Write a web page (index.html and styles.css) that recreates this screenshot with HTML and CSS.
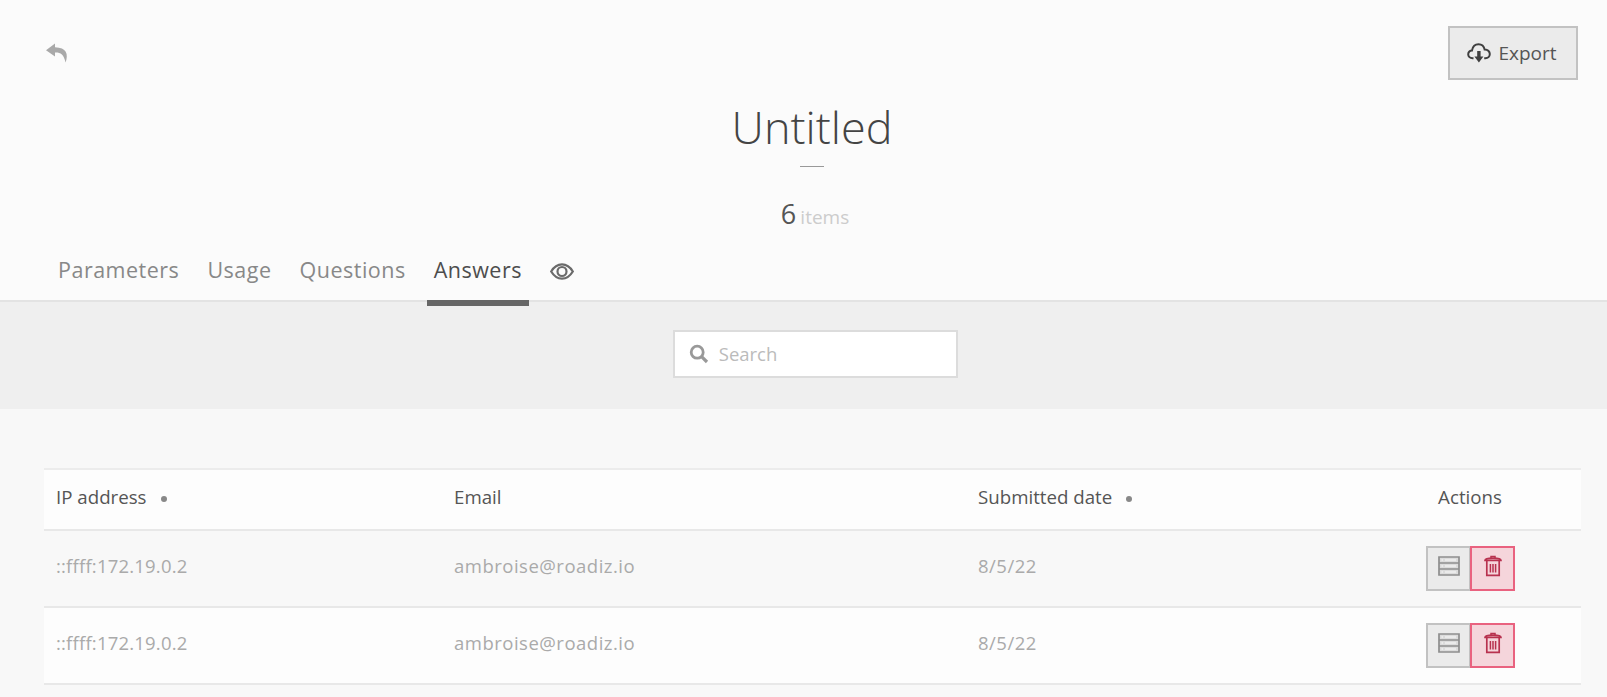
FILE: index.html
```html
<!DOCTYPE html>
<html lang="en">
<head>
<meta charset="utf-8">
<title>Untitled</title>
<link rel="stylesheet" href="styles.css">
</head>
<body>
<header class="head">
  <div class="top-bar">
    <a class="back" href="#" aria-label="Back">
      <svg width="24" height="20" viewBox="0 0 24 20"><path d="M10 0.5 L1 7.2 L10 13.5 V9.6 C15.5 9.4 18.6 11 20.6 19.5 C23.6 11 21.5 4.6 10 4.2 Z" fill="#a9a9a9"/></svg>
    </a>
    <a class="export" href="#">
      <svg width="24" height="20" viewBox="0 0 24 20" fill="none"><path d="M6.5 15.2 H5.6 C3 15.2 1.2 13.4 1.2 11.2 C1.2 9 3 7.3 5 7.4 C5.8 3 8.4 1.2 11.5 1.2 C14.6 1.2 17 3.4 17.6 6.4 C20.6 6.2 22.8 8.6 22.8 11 C22.8 13.4 20.9 15.2 18.4 15.2 H17.2" stroke="#3f3f3f" stroke-width="2"/><path d="M10.2 8 H13.6 V13.4 H16.4 L11.9 19.4 L7.4 13.4 H10.2 Z" fill="#3f3f3f"/></svg>
      <span>Export</span>
    </a>
  </div>
  <h1 class="title">Untitled</h1>
  <div class="dash"></div>
  <p class="count"><span class="num">6</span> <span class="unit">items</span></p>
  <nav class="tabs">
    <a class="tab" href="#">Parameters</a>
    <a class="tab" href="#">Usage</a>
    <a class="tab" href="#">Questions</a>
    <a class="tab active" href="#">Answers</a>
    <a class="tab eye" href="#" aria-label="Preview">
      <svg width="24" height="17" viewBox="0 0 24 17" fill="none"><path d="M1.2 8.5 C4 3.8 7.8 1.4 12 1.4 C16.2 1.4 20 3.8 22.8 8.5 C20 13.2 16.2 15.6 12 15.6 C7.8 15.6 4 13.2 1.2 8.5 Z" stroke="#6a6a6a" stroke-width="2.2"/><circle cx="12" cy="8.5" r="4.5" stroke="#6a6a6a" stroke-width="2.2"/></svg>
    </a>
  </nav>
</header>
<section class="filter">
  <label class="search">
    <svg width="20" height="20" viewBox="0 0 20 20" fill="none"><circle cx="8.2" cy="8.2" r="6" stroke="#999" stroke-width="2.8"/><path d="M12.6 12.6 L18 18" stroke="#999" stroke-width="3.2"/></svg>
    <span class="search-label">Search</span>
  </label>
</section>
<main class="content">
  <table class="list">
    <colgroup><col class="c1"><col class="c2"><col class="c3"><col class="c4"></colgroup>
    <thead>
      <tr>
        <th>IP address<i class="dot"></i></th>
        <th>Email</th>
        <th>Submitted date<i class="dot"></i></th>
        <th class="actions">Actions</th>
      </tr>
    </thead>
    <tbody>
      <tr class="alt">
        <td class="ip">::ffff:172.19.0.2</td>
        <td>ambroise@roadiz.io</td>
        <td>8/5/22</td>
        <td class="actions">
          <div class="btns">
            <a class="btn" href="#" aria-label="Details"><svg width="22" height="20" viewBox="0 0 22 20" fill="none"><path d="M1 1 H21 V19 H1 Z" fill="#dcdcdc"/><path d="M1 1 H21 V19 H1 Z M1 7 H21 M1 13 H21" stroke="#8e8e8e" stroke-width="1.7"/><path d="M7 4 H18 M7 10 H18 M7 16 H18" stroke="#fafafa" stroke-width="1.2"/><path d="M3.5 4 H5 M3.5 10 H5 M3.5 16 H5" stroke="#fafafa" stroke-width="1.2"/></svg></a>
            <a class="btn danger" href="#" aria-label="Delete"><svg width="18" height="22" viewBox="0 0 18 22" fill="none"><path d="M1 5.4 C1 3.6 5 3.2 9 3.2 C13 3.2 17 3.6 17 5.4 Z" stroke="#b8324f" stroke-width="1.7"/><path d="M7 3 V1.5 H11 V3" stroke="#b8324f" stroke-width="1.5"/><path d="M2.8 5.6 V20.4 H15.2 V5.6" stroke="#b8324f" stroke-width="1.7"/><path d="M6.4 9 V17.4 M9 9 V17.4 M11.6 9 V17.4" stroke="#b8324f" stroke-width="1.5"/></svg></a>
          </div>
        </td>
      </tr>
      <tr>
        <td class="ip">::ffff:172.19.0.2</td>
        <td>ambroise@roadiz.io</td>
        <td>8/5/22</td>
        <td class="actions">
          <div class="btns">
            <a class="btn" href="#" aria-label="Details"><svg width="22" height="20" viewBox="0 0 22 20" fill="none"><path d="M1 1 H21 V19 H1 Z" fill="#dcdcdc"/><path d="M1 1 H21 V19 H1 Z M1 7 H21 M1 13 H21" stroke="#8e8e8e" stroke-width="1.7"/><path d="M7 4 H18 M7 10 H18 M7 16 H18" stroke="#fafafa" stroke-width="1.2"/><path d="M3.5 4 H5 M3.5 10 H5 M3.5 16 H5" stroke="#fafafa" stroke-width="1.2"/></svg></a>
            <a class="btn danger" href="#" aria-label="Delete"><svg width="18" height="22" viewBox="0 0 18 22" fill="none"><path d="M1 5.4 C1 3.6 5 3.2 9 3.2 C13 3.2 17 3.6 17 5.4 Z" stroke="#b8324f" stroke-width="1.7"/><path d="M7 3 V1.5 H11 V3" stroke="#b8324f" stroke-width="1.5"/><path d="M2.8 5.6 V20.4 H15.2 V5.6" stroke="#b8324f" stroke-width="1.7"/><path d="M6.4 9 V17.4 M9 9 V17.4 M11.6 9 V17.4" stroke="#b8324f" stroke-width="1.5"/></svg></a>
          </div>
        </td>
      </tr>
    </tbody>
  </table>
</main>
</body>
</html>
```
FILE: styles.css
```css
* { box-sizing: border-box; }
html, body { height: 100%; }
body {
  margin: 0;
  background: #f8f8f8;
  font-family: "Open Sans", sans-serif;
  color: #444;
  overflow: hidden;
}
a { color: inherit; text-decoration: none; }

.head { height: 300px; background: #fbfbfb; border-bottom: 2px solid #e3e3e3; display: flex; flex-direction: column; align-items: center; box-sizing: content-box; }
.top-bar { width: 100%; height: 105px; padding: 26px 29px 0 45px; display: flex; justify-content: space-between; align-items: flex-start; }
.back { margin-top: 17px; display: block; line-height: 0; }
.export {
  width: 130px; height: 54px; padding-right: 2px;
  display: flex; align-items: center; justify-content: center; gap: 7px;
  background: #ebebeb; border: 2px solid #c2c2c2;
  font-size: 19px; color: #555;
}
.title { margin: 0 0 0 17px; font-weight: 300; font-size: 45px; line-height: 44px; color: #444; }
.dash { width: 24px; height: 1px; background: #999; margin: 17px 0 0 17px; }
.count { margin: 30px 0 0 23px; line-height: 33px; }
.num { font-size: 27px; color: #555; }
.unit { font-size: 19px; color: #ccc; }
.tabs { align-self: flex-start; margin: auto 0 0 51px; display: flex; height: 45px; }
.tab { padding: 0 7px; margin-right: 14px; font-size: 21.5px; line-height: 30px; color: #888; letter-spacing: 0.5px; position: relative; }
.tab.active { color: #4d4d4d; }
.tab.active::after { content: ""; position: absolute; left: 0; right: 0; bottom: -6px; height: 6px; background: #666; }
.tab.eye { padding-top: 8px; line-height: 0; }

.filter { height: 107px; background: #efefef; display: flex; justify-content: center; padding-top: 28px; padding-left: 23.5px; }
.search { width: 285px; height: 48px; background: #fff; border: 2px solid #dcdcdc; display: flex; align-items: center; gap: 10px; padding-left: 14px; font-size: 18.5px; color: #bbb; }
.search-label { margin-top: -2px; }

.content { padding: 59px 26px 0 44px; }
.list { width: 100%; table-layout: fixed; border-collapse: collapse; background: #fdfdfd; }
.c1 { width: 398px; } .c2 { width: 524px; } .c3 { width: 423px; }
.list th, .list td { padding: 0 0 6px 12px; text-align: left; border-bottom: 2px solid #e8e8e8; }
.list th { height: 61px; font-weight: 400; font-size: 18.7px; color: #555; border-top: 2px solid #ececec; }
.list td { height: 77px; font-size: 18.5px; color: #aaa; letter-spacing: 0.5px; }
.list td.ip { letter-spacing: 0.2px; }
.alt { background: #f8f8f8; }
.list .actions { text-align: center; padding: 0 30px 0 0; }
.list th.actions { padding-bottom: 6px; }
.dot { display: inline-block; width: 6px; height: 6px; border-radius: 50%; background: #888; margin-left: 14px; vertical-align: 2px; }
.btns { display: flex; justify-content: center; }
.btn { width: 45px; height: 45px; padding: 0 0 5px 1px; display: flex; align-items: center; justify-content: center; background: #ebebeb; border: 2px solid #c2c2c2; }
.btn.danger { margin-left: -1px; background: #f5d5db; border-color: #e9627f; }
```
